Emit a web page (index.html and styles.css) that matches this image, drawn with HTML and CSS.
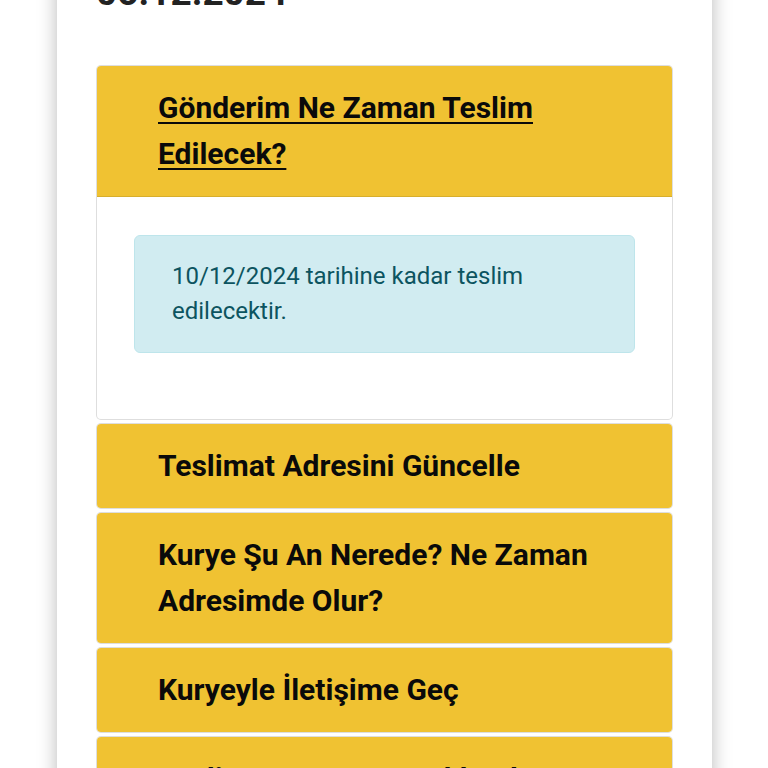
FILE: index.html
```html
<!DOCTYPE html>
<html lang="tr">
<head>
<meta charset="utf-8">
<link rel="stylesheet" href="styles.css">
</head>
<body>
<div class="page">
  <div class="card">
    <h2 class="date">05.12.2024</h2>
    <div class="accordion">
      <div class="item open">
        <div class="item-header"><a class="title underlined" href="#">Gönderim Ne Zaman Teslim Edilecek?</a></div>
        <div class="item-body">
          <div class="alert">10/12/2024 tarihine kadar teslim edilecektir.</div>
        </div>
      </div>
      <div class="item">
        <div class="item-header"><span class="title">Teslimat Adresini Güncelle</span></div>
      </div>
      <div class="item">
        <div class="item-header"><span class="title">Kurye Şu An Nerede? Ne Zaman Adresimde Olur?</span></div>
      </div>
      <div class="item">
        <div class="item-header"><span class="title">Kuryeyle İletişime Geç</span></div>
      </div>
      <div class="item">
        <div class="item-header"><span class="title">Teslimat ve Kurye Hakkında</span></div>
      </div>
    </div>
  </div>
</div>
</body>
</html>
```
FILE: styles.css
```css
html, body {
  margin: 0;
  padding: 0;
  background: #ffffff;
  font-family: Roboto, "Liberation Sans", sans-serif;
  overflow: hidden;
}

.page {
  padding-left: 57px;
  height: 768px;
  overflow: hidden;
}

.card {
  width: 655px;
  box-sizing: border-box;
  background: #ffffff;
  padding: 0 39px 40px;
  margin-top: -31px;
  box-shadow: 0 0 18px rgba(0, 0, 0, 0.28);
  min-height: 900px;
}

.date {
  margin: 0 0 48px;
  font-size: 37px;
  line-height: 48px;
  font-weight: 700;
  color: #222222;
}

.accordion {
  display: flex;
  flex-direction: column;
  gap: 3px;
}

.item {
  border: 1px solid rgba(0, 0, 0, 0.13);
  border-radius: 5px;
  overflow: hidden;
  background: #ffffff;
}

.item-header {
  background: #f0c232;
  padding: 19px 20px 19px 61px;
  border-bottom: 1px solid rgba(0, 0, 0, 0.1);
}

.item:not(.open) .item-header {
  border-bottom: none;
}

.title {
  display: block;
  font-size: 30px;
  line-height: 46px;
  font-weight: 700;
  color: #0a0a0a;
  text-decoration: none;
}

.title.underlined {
  display: inline;
  text-decoration: underline;
  text-decoration-thickness: 2px;
  text-underline-offset: 4px;
}

.item-body {
  padding: 38px 37px 66px;
}

.alert {
  background: #d1ecf1;
  color: #0c5460;
  border: 1px solid #bee5eb;
  border-radius: 6px;
  padding: 23px 37px;
  font-size: 24px;
  line-height: 35px;
}
```
